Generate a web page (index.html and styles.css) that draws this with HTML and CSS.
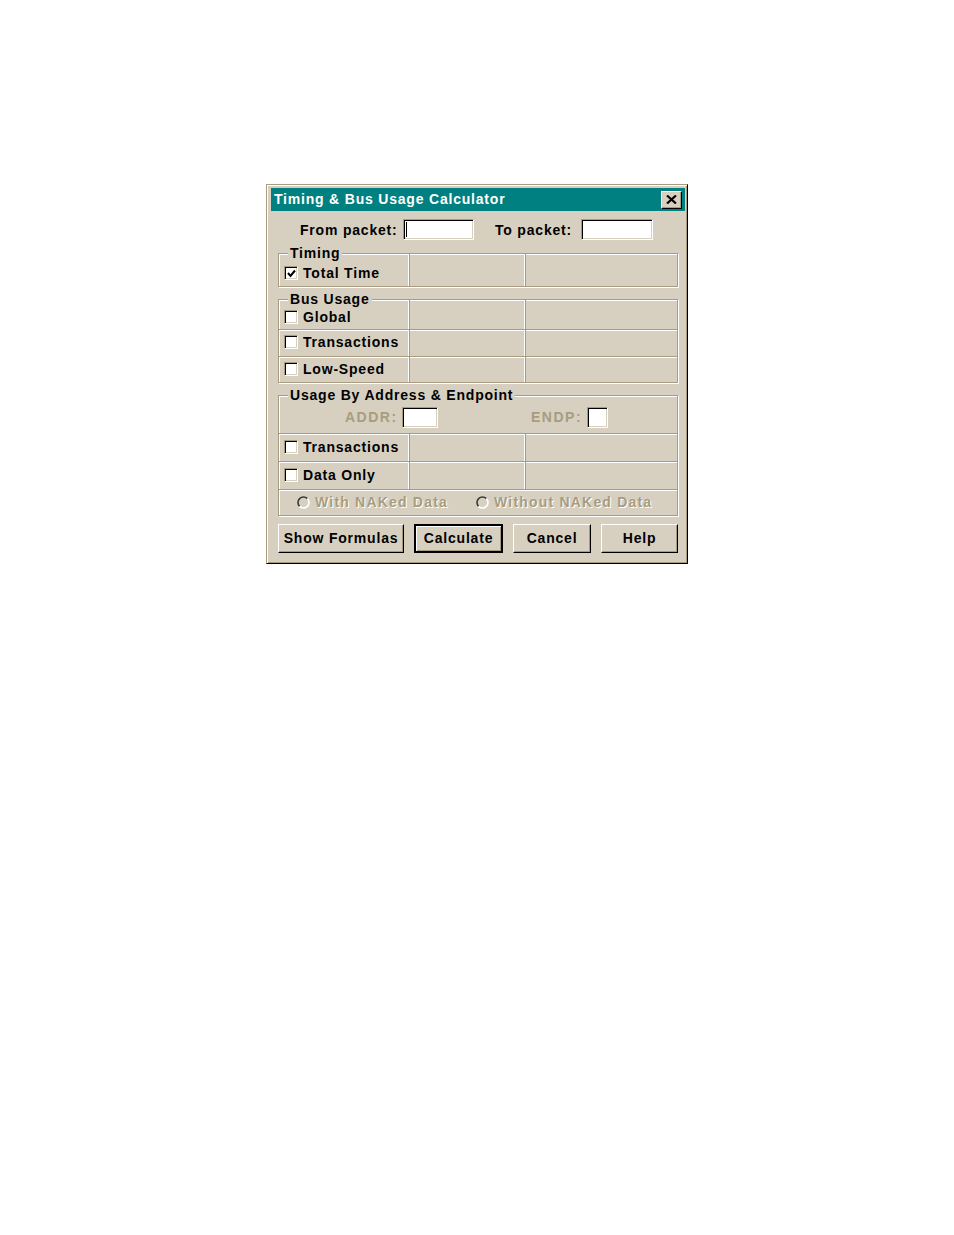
FILE: index.html
```html
<!DOCTYPE html>
<html>
<head>
<meta charset="utf-8">
<title>Timing &amp; Bus Usage Calculator</title>
<link rel="stylesheet" href="styles.css">
</head>
<body>
<div class="dialog">
  <div class="titlebar">
    <span class="title">Timing &amp; Bus Usage Calculator</span>
    <span class="close"><svg width="11" height="9" viewBox="0 0 11 9"><path d="M1 0.5 L10 8.5 M10 0.5 L1 8.5" stroke="#000" stroke-width="2.2" fill="none"/></svg></span>
  </div>
  <div class="content">
    <div class="packets">
      <span class="lbl lbl-from">From packet:</span>
      <span class="field"><span class="caret"></span></span>
      <span class="lbl lbl-to">To packet:</span>
      <span class="field"></span>
    </div>

    <div class="group g-timing">
      <span class="legend">Timing</span>
      <div class="row r-first h31">
        <div class="cell c1"><span class="check"><svg width="9" height="9" viewBox="0 0 9 9"><path d="M1 4 L3.5 7 L8 1.5" stroke="#000" stroke-width="2" fill="none"/></svg></span><span class="ctext">Total Time</span></div>
        <div class="cell c2"></div>
        <div class="cell c3"></div>
      </div>
    </div>

    <div class="group g-bus">
      <span class="legend">Bus Usage</span>
      <div class="row r-first h29">
        <div class="cell c1"><span class="check"></span><span class="ctext">Global</span></div>
        <div class="cell c2"></div>
        <div class="cell c3"></div>
      </div>
      <div class="row r-next h26">
        <div class="cell c1"><span class="check"></span><span class="ctext">Transactions</span></div>
        <div class="cell c2"></div>
        <div class="cell c3"></div>
      </div>
      <div class="row r-next h25">
        <div class="cell c1"><span class="check"></span><span class="ctext">Low-Speed</span></div>
        <div class="cell c2"></div>
        <div class="cell c3"></div>
      </div>
    </div>

    <div class="group g-usage">
      <span class="legend">Usage By Address &amp; Endpoint</span>
      <div class="addr-row">
        <span class="dis lbl-addr">ADDR:</span>
        <span class="field f-addr"></span>
        <span class="dis lbl-endp">ENDP:</span>
        <span class="field f-endp"></span>
      </div>
      <div class="row r-next h27">
        <div class="cell c1"><span class="check"></span><span class="ctext">Transactions</span></div>
        <div class="cell c2"></div>
        <div class="cell c3"></div>
      </div>
      <div class="row r-next h27">
        <div class="cell c1"><span class="check"></span><span class="ctext">Data Only</span></div>
        <div class="cell c2"></div>
        <div class="cell c3"></div>
      </div>
      <div class="radio-row">
        <span class="radio"><svg width="13" height="13" viewBox="0 0 13 13"><path d="M10.4 2.6 A5.5 5.5 0 0 0 2.6 10.4" stroke="#3a3a3a" stroke-width="1.6" fill="none"/><path d="M2.6 10.4 A5.5 5.5 0 0 0 10.4 2.6" stroke="#fff" stroke-width="1.6" fill="none"/></svg><span class="emb">With NAKed Data</span></span>
        <span class="radio"><svg width="13" height="13" viewBox="0 0 13 13"><path d="M10.4 2.6 A5.5 5.5 0 0 0 2.6 10.4" stroke="#3a3a3a" stroke-width="1.6" fill="none"/><path d="M2.6 10.4 A5.5 5.5 0 0 0 10.4 2.6" stroke="#fff" stroke-width="1.6" fill="none"/></svg><span class="emb">Without NAKed Data</span></span>
      </div>
    </div>

    <div class="buttons">
      <span class="btn b-show">Show Formulas</span>
      <span class="btn b-calc default">Calculate</span>
      <span class="btn b-cancel">Cancel</span>
      <span class="btn b-help">Help</span>
    </div>
  </div>
</div>
</body>
</html>
```
FILE: styles.css
```css
html, body {
  margin: 0;
  padding: 0;
  background: #ffffff;
}
body {
  font-family: "Liberation Sans", Arial, sans-serif;
  font-weight: bold;
  font-size: 14px;
  color: #000;
  letter-spacing: 0.8px;
}
.dialog {
  margin: 184px 0 0 266px;
  width: 422px;
  height: 380px;
  box-sizing: border-box;
  background: #d7d0c0;
  border: 1px solid;
  border-color: #a99b7f #000 #000 #a99b7f;
  box-shadow: inset 1px 1px #fff, inset -1px -1px #a99b7f;
  padding: 3px 2px 0 4px;
}
.titlebar {
  height: 23px;
  background: #008080;
  display: flex;
  align-items: center;
  justify-content: space-between;
  padding: 0 3px 0 3px;
}
.title {
  color: #fff;
  font-size: 14px;
  line-height: 23px;
}
.close {
  width: 21px;
  height: 18px;
  box-sizing: border-box;
  background: #d7d0c0;
  border: 1px solid;
  border-color: #fff #000 #000 #fff;
  box-shadow: inset -1px -1px #a99b7f;
  display: flex;
  align-items: center;
  justify-content: center;
  padding-bottom: 1px;
}
.content {
  padding: 0 7px;
}
.packets {
  margin-top: 8px;
  height: 21px;
  display: grid;
  grid-template-columns: 22px 103px 71px 21px 86px 72px;
  align-items: center;
}
.lbl-from { grid-column: 2; }
.lbl-to { grid-column: 5; }
.field {
  display: block;
  height: 21px;
  box-sizing: border-box;
  background: #fff;
  border: 1px solid;
  border-color: #a99b7f #fff #fff #a99b7f;
  box-shadow: inset 1px 1px #000, inset -1px -1px #d7d0c0;
  position: relative;
}
.caret {
  position: absolute;
  left: 2px;
  top: 2px;
  width: 1px;
  height: 15px;
  background: #000;
}
.group {
  position: relative;
  border: 1px solid #a99b7f;
  box-shadow: inset 1px 1px #fff, 1px 1px #fff;
  margin-top: 12px;
}
.g-timing { margin-top: 13px; }
.legend {
  position: absolute;
  top: -9px;
  left: 9px;
  padding: 0 2px;
  background: #d7d0c0;
  line-height: 16px;
  z-index: 1;
}
.row {
  display: grid;
  grid-template-columns: 130px 116px 152px;
}
.h31 { height: 32px; }
.h29 { height: 29px; }
.h26 { height: 26px; }
.h25 { height: 25px; }
.h27 { height: 27px; }
.r-first .cell { padding-top: 5px; }
.r-next {
  border-top: 1px solid #a99b7f;
  box-shadow: inset 0 1px #fff;
}
.r-next .c1 { padding-bottom: 2px; }
.cell {
  box-sizing: border-box;
  display: flex;
  align-items: center;
}
.c1 { padding-left: 5px; }
.c2, .c3 {
  border-left: 1px solid #a99b7f;
  box-shadow: -1px 0 #fff;
}
.check {
  width: 14px;
  height: 14px;
  box-sizing: border-box;
  background: #fff;
  border: 1px solid;
  border-color: #a99b7f #fff #fff #a99b7f;
  box-shadow: inset 1px 1px #000, inset -1px -1px #d7d0c0;
  display: flex;
  align-items: center;
  justify-content: center;
  flex: none;
}
.check svg { margin: 1px 0 0 1px; }
.ctext {
  margin-left: 5px;
}
.addr-row {
  height: 37px;
  box-sizing: border-box;
  padding-top: 5px;
  display: grid;
  grid-template-columns: 66px 57px 36px 93px 56px 21px;
  align-items: center;
}
.lbl-addr { grid-column: 2; }
.lbl-endp { grid-column: 5; }
.dis {
  color: #a89c80;
  letter-spacing: 1.5px;
}
.f-addr, .f-endp { height: 21px; }
.radio-row {
  height: 26px;
  border-top: 1px solid #a99b7f;
  box-shadow: inset 0 1px #fff;
  display: flex;
  align-items: center;
  padding-left: 18px;
  box-sizing: border-box;
  padding-bottom: 1px;
}
.radio {
  width: 179px;
  display: flex;
  align-items: center;
}
.radio svg { flex: none; }
.emb {
  margin-left: 5px;
  color: #a89c80;
  text-shadow: 1px 1px #fff;
  letter-spacing: 1.2px;
}
.buttons {
  margin-top: 8px;
  display: flex;
  justify-content: space-between;
}
.btn {
  height: 29px;
  box-sizing: border-box;
  display: flex;
  align-items: center;
  justify-content: center;
  border: 1px solid;
  border-color: #fff #000 #000 #fff;
  box-shadow: inset -1px -1px #a99b7f;
  padding-bottom: 1px;
}
.btn.default {
  border: 2px solid #000;
  box-shadow: inset 1px 1px #fff, inset -1px -1px #a99b7f;
}
.b-show { width: 126px; }
.b-calc { width: 89px; }
.b-cancel { width: 78px; }
.b-help { width: 77px; }
```
